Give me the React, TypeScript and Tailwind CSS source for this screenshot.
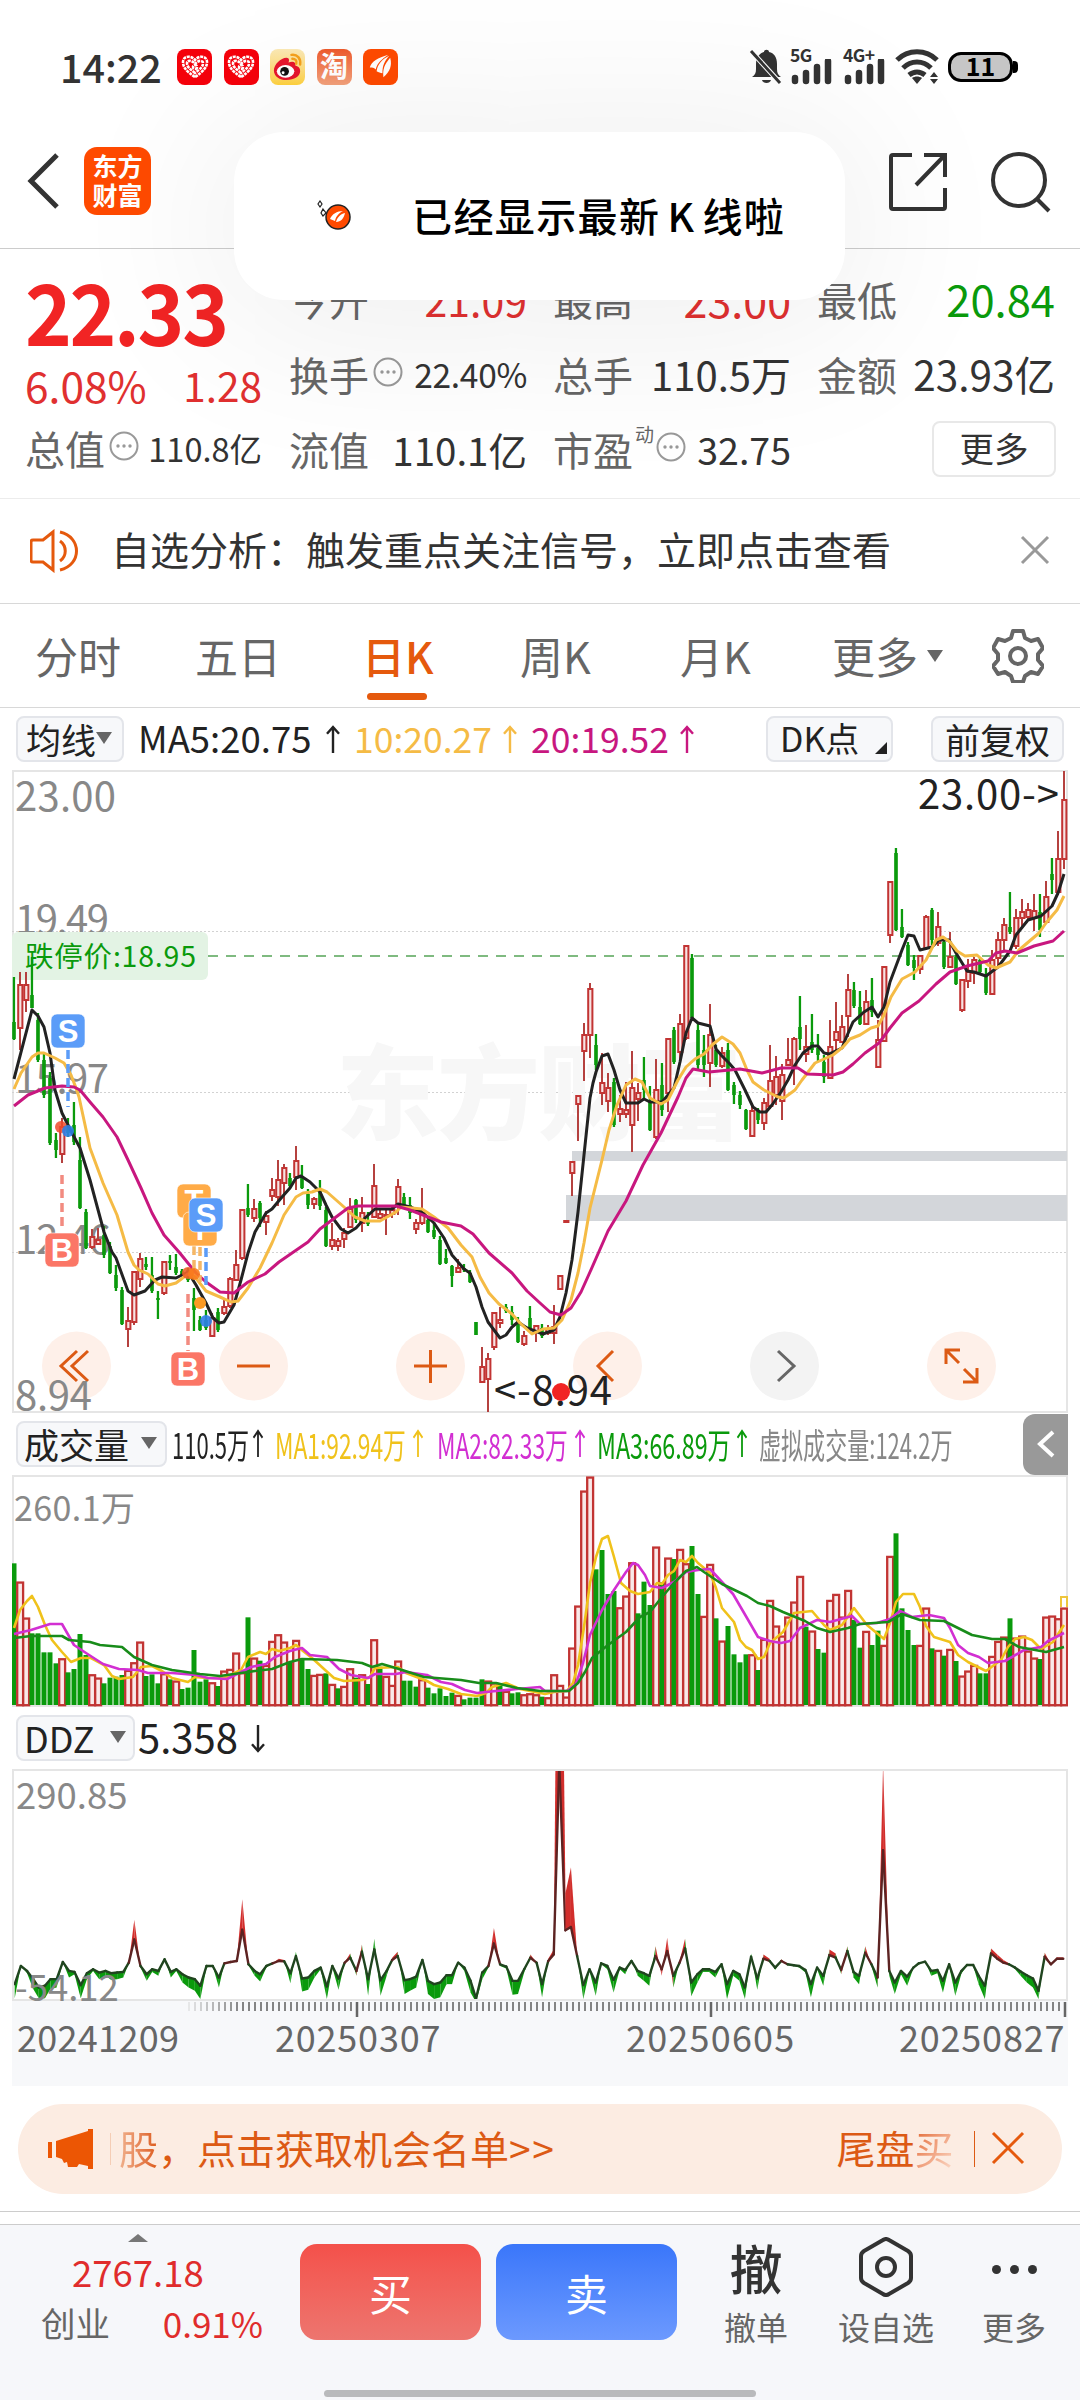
import React from 'react';

const RED = '#c23433';
const GREEN = '#0a9a0c';

// [up, high, bodyTop, bodyBottom, low]
type Candle = [number, number, number, number, number];

const candles: Candle[] = [
  [0, 977, 1022, 1039, 1040], [1, 972, 985, 1028, 1050], [1, 972, 985, 1000, 1012], [0, 957, 995, 1008, 1008],
  [0, 1013, 1020, 1060, 1062], [0, 1053, 1060, 1095, 1098], [0, 1072, 1078, 1143, 1145], [0, 1133, 1140, 1150, 1158],
  [1, 1118, 1127, 1154, 1163], [0, 1118, 1125, 1133, 1137], [0, 1102, 1125, 1142, 1145], [0, 1137, 1160, 1208, 1209],
  [0, 1209, 1212, 1248, 1249], [1, 1229, 1237, 1247, 1249], [1, 1228, 1240, 1244, 1245], [0, 1226, 1235, 1255, 1258],
  [0, 1242, 1246, 1273, 1274], [0, 1265, 1275, 1288, 1291], [0, 1287, 1290, 1324, 1325], [1, 1307, 1321, 1329, 1347],
  [1, 1271, 1272, 1322, 1325], [1, 1253, 1259, 1279, 1287], [0, 1257, 1264, 1267, 1270], [0, 1257, 1275, 1291, 1293],
  [0, 1291, 1298, 1300, 1319], [1, 1262, 1262, 1293, 1295], [0, 1255, 1261, 1263, 1270], [0, 1254, 1267, 1273, 1275],
  [0, 1269, 1271, 1275, 1276], [0, 1268, 1270, 1280, 1282], [0, 1288, 1298, 1310, 1331], [0, 1316, 1320, 1330, 1331],
  [0, 1310, 1320, 1328, 1330], [1, 1313, 1318, 1336, 1337], [0, 1308, 1312, 1330, 1332], [1, 1300, 1307, 1313, 1315],
  [1, 1277, 1279, 1306, 1308], [1, 1250, 1265, 1280, 1280], [1, 1210, 1210, 1258, 1260], [0, 1184, 1208, 1215, 1217],
  [1, 1199, 1209, 1218, 1222], [0, 1201, 1203, 1218, 1227], [1, 1211, 1216, 1222, 1235], [1, 1178, 1190, 1196, 1201],
  [1, 1160, 1180, 1197, 1206], [1, 1164, 1168, 1183, 1205], [0, 1173, 1178, 1186, 1188], [1, 1146, 1161, 1177, 1190],
  [0, 1165, 1177, 1188, 1189], [0, 1189, 1194, 1205, 1209], [1, 1197, 1199, 1204, 1209], [0, 1180, 1190, 1206, 1210],
  [0, 1207, 1210, 1246, 1247], [1, 1223, 1240, 1246, 1250], [1, 1238, 1241, 1246, 1251], [1, 1228, 1233, 1239, 1248],
  [1, 1198, 1209, 1227, 1228], [0, 1199, 1200, 1220, 1223], [1, 1197, 1213, 1223, 1232], [0, 1212, 1220, 1224, 1226],
  [1, 1164, 1186, 1217, 1218], [1, 1208, 1214, 1218, 1219], [1, 1210, 1215, 1216, 1235], [1, 1205, 1210, 1214, 1218],
  [1, 1179, 1187, 1205, 1215], [0, 1193, 1197, 1205, 1209], [0, 1197, 1205, 1213, 1219], [1, 1219, 1223, 1229, 1234],
  [1, 1188, 1213, 1223, 1225], [0, 1217, 1220, 1232, 1233], [0, 1222, 1230, 1237, 1239], [0, 1236, 1240, 1264, 1265],
  [0, 1249, 1258, 1263, 1264], [0, 1265, 1266, 1276, 1287], [1, 1259, 1268, 1272, 1273], [0, 1264, 1268, 1270, 1272],
  [0, 1270, 1273, 1282, 1283], [0, 1322, 1322, 1335, 1335], [1, 1347, 1367, 1382, 1382], [1, 1353, 1359, 1379, 1412],
  [1, 1312, 1313, 1347, 1350], [1, 1307, 1320, 1323, 1328], [0, 1304, 1307, 1311, 1313], [0, 1306, 1312, 1320, 1325],
  [0, 1317, 1320, 1342, 1343], [1, 1331, 1336, 1344, 1346], [0, 1306, 1318, 1328, 1331], [1, 1325, 1326, 1332, 1342],
  [0, 1324, 1328, 1336, 1338], [1, 1325, 1329, 1333, 1335], [1, 1305, 1327, 1333, 1344], [1, 1275, 1276, 1289, 1289],
  [1, 1221, 1221, 1222, 1222], [1, 1161, 1162, 1173, 1196], [1, 1095, 1096, 1104, 1141], [1, 1023, 1035, 1051, 1081],
  [1, 983, 989, 1035, 1058], [0, 1034, 1045, 1065, 1070], [1, 1053, 1083, 1093, 1105], [1, 1073, 1088, 1101, 1112],
  [0, 1078, 1082, 1125, 1127], [1, 1095, 1109, 1114, 1122], [1, 1082, 1110, 1114, 1118], [1, 1051, 1088, 1125, 1152],
  [1, 1083, 1093, 1099, 1121], [0, 1057, 1080, 1090, 1100], [0, 1086, 1102, 1130, 1131], [1, 1059, 1090, 1137, 1139],
  [0, 1063, 1085, 1110, 1116], [1, 1038, 1039, 1093, 1112], [0, 1027, 1030, 1062, 1064], [1, 1014, 1024, 1052, 1060],
  [1, 945, 946, 1038, 1040], [0, 954, 958, 1018, 1018], [0, 1022, 1030, 1065, 1069], [0, 1035, 1050, 1065, 1077],
  [1, 1004, 1035, 1063, 1087], [0, 1045, 1050, 1065, 1067], [1, 1047, 1053, 1066, 1068], [0, 1043, 1050, 1090, 1091],
  [0, 1082, 1085, 1095, 1104], [0, 1091, 1095, 1105, 1109], [0, 1109, 1110, 1129, 1130], [1, 1103, 1111, 1136, 1137],
  [0, 1108, 1110, 1120, 1124], [1, 1098, 1103, 1123, 1130], [1, 1045, 1081, 1106, 1109], [1, 1056, 1077, 1095, 1105],
  [1, 1064, 1075, 1101, 1120], [1, 1038, 1060, 1065, 1066], [1, 1037, 1039, 1068, 1085], [0, 996, 1027, 1039, 1050],
  [1, 1025, 1047, 1054, 1062], [0, 1014, 1042, 1050, 1053], [0, 1034, 1048, 1055, 1062], [0, 1055, 1062, 1077, 1083],
  [1, 1020, 1047, 1078, 1079], [1, 1002, 1032, 1040, 1050], [1, 1015, 1027, 1042, 1043], [1, 974, 990, 1016, 1037],
  [0, 982, 990, 1006, 1008], [0, 991, 1007, 1024, 1025], [1, 990, 1002, 1024, 1025], [0, 978, 1000, 1012, 1017],
  [1, 1020, 1040, 1067, 1068], [1, 967, 967, 1041, 1041], [1, 882, 882, 935, 943], [0, 848, 853, 930, 931],
  [0, 909, 927, 937, 938], [0, 942, 945, 965, 966], [0, 955, 960, 968, 980], [1, 955, 956, 969, 974],
  [1, 915, 917, 948, 950], [0, 908, 910, 940, 945], [1, 912, 927, 943, 946], [0, 938, 942, 967, 969],
  [1, 932, 957, 967, 968], [0, 955, 957, 984, 985], [1, 980, 980, 1010, 1012], [1, 959, 972, 981, 988],
  [1, 957, 960, 973, 984], [0, 957, 960, 972, 975], [0, 968, 975, 993, 995], [1, 950, 960, 994, 995],
  [1, 932, 940, 958, 966], [1, 918, 925, 940, 950], [0, 892, 927, 932, 934], [1, 909, 918, 946, 949],
  [1, 899, 912, 918, 928], [1, 903, 910, 917, 920], [1, 894, 911, 918, 931], [0, 894, 912, 930, 937],
  [1, 881, 897, 922, 923], [0, 858, 874, 880, 894], [1, 831, 859, 892, 895], [1, 771, 800, 859, 869],
];

const ma5 =
  '14,1079 32,1010 38,1016 44,1027 50,1053 55,1090 62,1113 72,1133 80,1148 90,1180 104,1232 112,1252 116,1258 128,1291 134,1295 145,1291 155,1280 162,1277 176,1278 188,1272 196,1285 206,1303 213,1318 219,1323 224,1322 234,1305 241,1280 248,1253 255,1232 266,1213 272,1209 282,1197 290,1188 296,1178 301,1176 310,1182 320,1192 326,1205 332,1217 341,1229 348,1233 356,1228 365,1218 375,1209 392,1209 398,1204 410,1207 422,1212 434,1223 444,1238 452,1255 464,1269 470,1273 476,1287 482,1307 488,1322 494,1330 500,1338 506,1335 512,1327 518,1322 527,1328 535,1331 543,1334 554,1330 560,1317 566,1293 572,1260 578,1212 584,1155 590,1098 593,1083 596,1072 602,1056 608,1054 614,1070 620,1090 626,1103 638,1103 644,1099 650,1102 662,1102 668,1095 674,1088 680,1062 686,1033 692,1018 698,1023 710,1026 716,1049 722,1056 729,1063 735,1070 745,1090 753,1107 760,1112 766,1112 772,1105 781,1092 788,1080 795,1065 803,1053 812,1046 818,1046 824,1053 829,1054 842,1048 846,1038 853,1022 864,1012 872,1007 878,1017 884,1007 890,982 902,950 908,935 914,936 920,950 932,947 939,940 949,940 956,953 967,971 974,972 986,976 998,967 1010,951 1016,935 1028,920 1041,916 1052,906 1058,893 1064,874';
const ma10 =
  '14,1089 21,1073 32,1057 38,1053 44,1053 55,1058 64,1063 71,1075 76,1088 79,1097 90,1148 103,1183 117,1215 128,1252 134,1265 139,1270 148,1274 158,1284 165,1286 176,1283 188,1274 195,1277 206,1291 220,1297 231,1302 238,1301 248,1288 260,1268 272,1243 284,1215 296,1197 303,1193 312,1192 320,1189 327,1192 344,1207 355,1217 365,1221 380,1221 396,1212 401,1207 422,1209 434,1217 448,1228 461,1245 472,1257 480,1277 489,1293 499,1304 512,1314 520,1323 532,1334 543,1329 554,1328 562,1320 571,1300 578,1273 584,1243 590,1208 602,1160 609,1130 617,1105 626,1085 635,1079 642,1082 650,1098 661,1104 668,1100 678,1080 686,1067 695,1059 704,1054 712,1045 722,1037 733,1044 740,1053 747,1070 753,1082 764,1090 778,1097 784,1098 795,1090 802,1080 815,1063 833,1055 843,1047 850,1039 860,1035 871,1028 878,1026 884,1015 891,997 902,979 915,972 926,960 936,940 943,937 950,942 957,951 965,956 977,955 988,965 996,968 1010,962 1019,950 1039,933 1046,923 1057,910 1064,896';
const ma20 =
  '14,1106 28,1095 45,1088 62,1086 74,1087 80,1090 90,1102 103,1117 117,1137 128,1160 141,1188 152,1213 164,1235 179,1252 196,1273 206,1282 220,1292 234,1293 248,1282 265,1274 279,1262 308,1242 320,1229 332,1220 348,1208 358,1206 396,1206 410,1210 441,1222 461,1226 473,1234 489,1253 512,1273 527,1291 540,1303 550,1312 561,1315 571,1308 581,1292 590,1272 608,1231 626,1201 643,1165 661,1133 678,1097 686,1078 693,1069 709,1072 740,1069 762,1073 781,1068 798,1068 807,1074 833,1075 843,1072 853,1064 865,1053 879,1043 890,1028 902,1013 919,1001 936,984 950,972 967,966 988,961 996,953 1005,951 1017,953 1034,946 1053,941 1064,931';

// bar tops in thirds of a pixel, positive = up day, negative = down day
const volumes = [
  -460, 515, 623, -670, -670, -727, -727, -760, 745, -787, -777, -672, -735, 793, 803, -820, -803, -800, -795, 780,
  757, 695, -798, -793, -820, 790, -808, 812, -837, -833, -720, -815, -808, 817, -828, 782, 777, 728, 787, -622,
  743, -752, 765, 693, 673, 695, -757, 690, -748, -777, 795, 792, -790, 822, -835, 828, 775, -803, 793, -822,
  688, -770, 798, 825, 752, -812, -812, -830, 808, -833, -850, -835, -858, -848, 855, -868, -863, -863, -808, 812,
  818, -820, 843, -850, -847, 853, 850, 853, -860, 862, 793, 825, 860, 713, 587, 242, 200, -478, -420, -552,
  -543, 592, 557, 457, -610, -515, -585, 410, -517, 443, -447, 417, 460, -408, -552, 618, 462, -625, 692, -648,
  -733, -757, -733, 733, -780, 687, 570, 647, 677, 620, 575, 498, -650, 662, -717, -728, 570, 552, 620, 540,
  -630, -713, 663, -705, -662, 705, 438, -370, -595, -660, -705, 705, 593, -715, 720, -737, 717, -753, 797, 782,
  765, -790, -790, 738, 693, 680, -625, 683, 677, 722, 743, -747, 620, 617, 625, 593,
];

const vma1 =
  '14,218 20,200 27,191 32,186 38,197 45,215 52,230 62,242 71,252 81,248 91,248 104,255 112,266 119,269 133,267 141,257 152,256 162,261 172,268 188,272 195,267 207,268 224,268 241,260 248,247 260,242 266,244 272,239 279,241 290,238 296,235 303,241 312,248 324,259 334,268 344,271 362,270 370,267 375,258 398,257 406,263 427,271 434,275 448,279 461,284 477,286 486,283 492,277 506,273 520,279 540,283 545,284 554,282 567,281 573,273 578,255 584,217 590,173 596,147 602,129 608,126 614,147 621,173 630,181 638,184 650,182 657,173 662,174 668,165 674,161 680,150 686,152 692,146 698,153 710,163 716,178 722,198 734,212 740,230 746,237 752,240 758,249 764,247 770,233 783,222 794,203 812,201 824,215 830,220 842,215 854,198 867,215 884,229 890,213 896,192 903,184 914,184 920,197 926,216 934,227 950,232 958,245 968,252 986,261 1001,250 1008,237 1015,229 1024,227 1032,230 1041,239 1053,232 1064,215';
const vma2 =
  '14,224 31,220 50,214 62,214 74,235 86,243 103,254 119,259 138,260 148,263 172,263 196,265 208,268 227,269 241,262 251,257 266,254 275,247 290,241 302,238 310,245 327,247 339,259 351,265 368,268 375,264 396,264 406,262 427,265 441,272 452,274 465,280 477,283 496,281 517,279 540,277 545,281 567,281 576,274 583,253 590,225 602,200 614,180 626,162 633,153 638,155 645,165 650,176 662,178 674,172 686,162 698,160 710,159 722,172 733,184 747,208 758,227 770,231 781,233 790,231 800,218 817,210 830,212 852,206 860,214 877,213 890,209 900,201 912,207 929,205 944,208 950,218 958,235 968,243 979,247 988,253 1005,251 1024,240 1041,237 1048,231 1064,223';
const vma3 =
  '14,228 31,226 62,226 69,230 90,232 100,235 122,237 134,247 152,255 172,260 200,264 220,266 241,263 255,261 272,259 290,252 302,249 337,250 362,253 372,257 382,254 399,259 424,267 461,270 479,273 496,273 517,278 540,281 569,281 578,273 585,262 592,248 608,235 626,222 640,207 650,202 662,187 674,173 686,161 697,157 704,162 722,174 747,186 758,193 770,196 783,202 805,211 817,218 830,222 848,218 860,214 888,212 902,204 920,210 944,211 956,217 972,225 992,229 1005,229 1019,237 1046,242 1064,237';

// [x, slow line, fast line]
const ddz = [
  [20, 705, 748], [29, 650, 650], [38, 665, 672], [47, 690, 720], [55, 715, 748], [64, 710, 748], [72, 690, 720], [81, 690, 715],
  [90, 638, 638], [99, 665, 685], [107, 668, 675], [116, 708, 748], [125, 672, 690], [134, 660, 665], [143, 670, 690], [152, 665, 680],
  [160, 672, 692], [169, 670, 690], [178, 668, 685], [186, 640, 640], [194, 570, 510], [203, 650, 655], [212, 675, 695], [220, 660, 668],
  [229, 665, 680], [238, 630, 625], [247, 668, 685], [255, 660, 665], [264, 675, 700], [273, 685, 715], [282, 690, 725], [290, 710, 750],
  [299, 650, 655], [308, 650, 650], [317, 685, 715], [325, 642, 640], [334, 638, 636], [343, 635, 633], [351, 540, 448], [360, 645, 648],
  [369, 665, 680], [377, 675, 697], [386, 650, 655], [395, 642, 642], [404, 635, 628], [412, 636, 632], [421, 672, 702], [429, 620, 607],
  [438, 688, 727], [447, 685, 722], [456, 665, 685], [465, 655, 660], [474, 712, 750], [482, 650, 655], [491, 688, 722], [500, 640, 638],
  [508, 625, 612], [517, 665, 680], [525, 607, 585], [534, 690, 740], [543, 600, 568], [552, 693, 740], [561, 665, 680], [569, 632, 625],
  [577, 620, 607], [587, 693, 735], [595, 690, 725], [604, 682, 715], [613, 632, 628], [621, 695, 735], [630, 705, 750], [639, 700, 745],
  [648, 678, 705], [656, 678, 705], [665, 640, 640], [674, 655, 665], [683, 695, 730], [691, 748, 760], [700, 670, 690], [709, 650, 655],
  [717, 582, 535], [726, 645, 650], [735, 652, 658], [744, 695, 737], [752, 695, 735], [761, 660, 670], [770, 625, 615], [779, 640, 640],
  [787, 705, 745], [796, 635, 628], [804, 615, 600], [812, 40, -1235], [821, 542, 430], [829, 532, 352], [838, 620, 615], [847, 708, 750],
  [856, 660, 665], [865, 700, 740], [873, 642, 645], [882, 650, 660], [891, 692, 730], [900, 655, 660], [908, 662, 675], [917, 635, 630],
  [926, 665, 680], [935, 672, 695], [943, 680, 710], [952, 620, 590], [961, 660, 680], [969, 605, 565], [978, 680, 715], [987, 640, 635],
  [995, 597, 568], [1004, 700, 742], [1013, 675, 700], [1021, 660, 668], [1030, 660, 668], [1039, 668, 685], [1048, 645, 648], [1056, 705, 750],
  [1065, 665, 680], [1074, 675, 695], [1082, 715, 750], [1091, 622, 612], [1100, 688, 722], [1109, 628, 615], [1118, 635, 628], [1126, 655, 662],
  [1135, 635, 630], [1144, 645, 648], [1153, 648, 650], [1161, 650, 655], [1170, 662, 670], [1178, 705, 745], [1187, 655, 660], [1196, 680, 710],
  [1205, 617, 600], [1214, 625, 612], [1222, 662, 675], [1231, 605, 590], [1240, 668, 685], [1248, 680, 705], [1257, 610, 590], [1266, 645, 650],
  [1275, 685, 715], [1283, 300, 40], [1292, 665, 680], [1300, 700, 735], [1309, 665, 675], [1318, 682, 710], [1327, 655, 658], [1335, 642, 645],
  [1344, 637, 634], [1353, 665, 680], [1362, 662, 672], [1370, 695, 730], [1379, 645, 650], [1388, 700, 740], [1397, 665, 672], [1405, 647, 650],
  [1414, 647, 650], [1422, 680, 705], [1431, 710, 750], [1440, 612, 597], [1449, 628, 615], [1458, 640, 632], [1466, 645, 642], [1475, 655, 660],
  [1483, 667, 680], [1492, 678, 700], [1501, 688, 715], [1509, 725, 750], [1518, 622, 610], [1527, 645, 645], [1536, 628, 624], [1545, 628, 624],
];

const barX = (i: number) => 14 + i * 6;

const Arrow: React.FC<{ className?: string; down?: boolean }> = ({ className = 'w-4', down }) => (
  <svg viewBox="0 0 16 30" preserveAspectRatio="none" className={`h-[29px] shrink-0 ${down ? 'rotate-180' : ''} ${className}`} fill="none" stroke="currentColor" strokeWidth="2.4">
    <path d="M8 29V2M2 9l6-7 6 7" />
  </svg>
);

const Triangle: React.FC<{ className?: string }> = ({ className = '' }) => (
  <svg viewBox="0 0 16 12" className={`h-3 w-4 shrink-0 ${className}`} fill="#666">
    <path d="M0 0h16L8 12z" />
  </svg>
);

const InfoDot = () => (
  <svg viewBox="0 0 30 30" className="h-[30px] w-[30px] shrink-0" fill="none" stroke="#999" strokeWidth="2">
    <circle cx="15" cy="15" r="13.5" />
    <g fill="#999" stroke="none">
      <circle cx="9" cy="15" r="1.7" />
      <circle cx="15" cy="15" r="1.7" />
      <circle cx="21" cy="15" r="1.7" />
    </g>
  </svg>
);

const Flame: React.FC<{ className?: string }> = ({ className = '' }) => (
  <svg viewBox="0 0 36 36" className={className} fill="#fff">
    <path d="M7 19C9 13 15 9 26 6c-7 5-11 8-13 15-2-2-3-2-6-2z" />
    <path d="M14 23c1-7 5-12 13-16-5 6-7 10-7 18-2 0-4-1-6-2z" />
    <path d="M21 29c-1-8 1-13 7-20 2 8 0 14-7 20z" />
  </svg>
);

const JdBadge = () => (
  <div className="flex h-9 w-[35px] items-center justify-center rounded-lg bg-[#f5000b]">
    <svg viewBox="0 0 28 24" className="h-6 w-7" fill="none" stroke="#fff" strokeWidth="2.6" strokeDasharray="3 0.8">
      <path d="M14 22C5 16 2 12 2 7c0-6 8-7 12-2 4-5 12-4 12 2 0 5-3 9-12 15z" />
      <path d="M14 18c-5-4-8-6-8-10 0-3 5-3 8 1 3-4 8-4 8-1 0 4-3 6-8 10z" />
      <circle cx="14" cy="12" r="2" />
    </svg>
  </div>
);

const SignalBars: React.FC<{ label: string; className?: string }> = ({ label, className = '' }) => (
  <div className={`flex h-[37px] w-[42px] flex-col ${className}`}>
    <span className="h-3 whitespace-nowrap text-[17.5px] font-bold leading-[13px] tracking-[-0.5px]">{label}</span>
    <svg viewBox="0 0 42 26" className="-mt-[1px] h-[26px] w-[42px]" stroke="currentColor" strokeWidth="6.5" strokeLinecap="round">
      <path d="M5 19v3M16 14v8M27 8v14M38 2v20" />
    </svg>
  </div>
);

const StatusBar = () => (
  <div className="flex h-[124px] items-center pl-[60px] pr-[62px] pt-[9px] text-[#333]">
    <span className="-mt-[1px] w-[117px] text-[39.5px] font-medium leading-none">14:22</span>
    <div className="flex gap-[11.5px]">
      <JdBadge />
      <JdBadge />
      <div className="h-9 w-[35px] rounded-lg bg-gradient-to-b from-[#fbe9b5] to-[#ffd23c]">
        <svg viewBox="0 0 36 36">
          <path d="M4 22c0-6 7-13 13-13 3 0 3 3 2 5 4-2 8-1 7 3 4 1 5 3 5 6 0 5-6 9-14 9-7 0-13-4-13-10z" fill="#e6162d" />
          <ellipse cx="16" cy="23" rx="9" ry="6.500" fill="#fff" />
          <circle cx="15" cy="23" r="4.500" fill="#111" />
          <circle cx="13.500" cy="24.500" r="1.500" fill="#fff" />
          <path d="M22 6c6-1 10 4 9 10M23 10c3 0 5 2 4 5" fill="none" stroke="#f5a11c" strokeWidth="2.500" strokeLinecap="round" />
        </svg>
      </div>
      <div className="flex h-9 w-[35px] items-center justify-center rounded-lg bg-gradient-to-b from-[#ee5a2b] to-[#f3a27c] pb-[3px] text-[28px] font-bold leading-none text-white">淘</div>
      <div className="h-9 w-[35px] rounded-lg bg-[#ff4a00]">
        <Flame />
      </div>
    </div>
    <div className="ml-auto flex items-center text-[#333]">
      <svg viewBox="0 0 34 38" className="h-[38px] w-[34px]" fill="#333">
        <path d="M3 29c3-2 4-4 4-8v-5C7 9 11 5 15 4c0-3 5-3 5 0 5 1 8 5 8 12v5c0 4 1 6 4 8z" />
        <path d="M13 32h9c-1 4-8 4-9 0z" />
        <path d="M3 4l29 32" stroke="#fff" strokeWidth="5" />
        <path d="M2 3l29 32" stroke="#333" strokeWidth="3" />
      </svg>
      <SignalBars label="5G" className="ml-[7px]" />
      <SignalBars label="4G+" className="ml-[11px]" />
      <svg viewBox="0 0 46 38" className="ml-[10px] h-[38px] w-[46px]" fill="none" stroke="#333" strokeWidth="5">
        <path d="M2 12C13 1 31 1 42 12M8 20c8-8 20-8 28 0M14 27c5-4 11-4 16 0" />
        <path d="M17 30c3-2 7-2 10 0l-5 6z" fill="#333" stroke="none" />
        <path d="M35 29l4-5 4 5zM35 31l4 5 4-5z" fill="#333" stroke="none" />
      </svg>
      <div className="ml-[7px] flex items-center">
        <div className="flex h-[30px] w-[65px] items-center justify-center rounded-[13px] border-[3px] border-black bg-[#c6c6c6] pb-[2px] text-[25px] font-bold leading-none text-black">11</div>
        <div className="h-3 w-[5px] rounded-r bg-black" />
      </div>
    </div>
  </div>
);

const Header = () => (
  <header className="flex h-[125px] items-center border-b border-[#ccc] pl-[26px] pr-[28px]">
    <svg viewBox="0 0 34 56" className="-mt-[10px] h-14 w-[34px]" fill="none" stroke="#333" strokeWidth="5">
      <path d="M31 2L5 28l26 26" />
    </svg>
    <div className="-mt-[10px] ml-[24px] flex h-[68px] w-[67px] flex-col items-center justify-center rounded-[13px] bg-[#ff4a00] pb-[2px] text-[25px] font-bold leading-[29px] text-white">
      <span>东方</span>
      <span>财富</span>
    </div>
    <svg viewBox="0 0 60 60" className="ml-auto -mt-[8px] h-[60px] w-[60px]" fill="none" stroke="#333" strokeWidth="4">
      <path d="M24 3H5q-2 0-2 2v50q0 2 2 2h50q2 0 2-2V36M36 3h21v22M57 3L28 33" />
    </svg>
    <svg viewBox="0 0 62 62" className="-mt-[8px] ml-[42px] h-[62px] w-[62px]" fill="none" stroke="#333" strokeWidth="4">
      <circle cx="29" cy="29" r="26" />
      <path d="M46 47l13 13" />
    </svg>
  </header>
);

const Toast = () => (
  <div className="absolute left-[234px] top-[132px] flex h-[168px] w-[611px] items-center rounded-[50px] bg-white pl-[83px] shadow-[0_10px_170px_20px_rgba(0,0,0,0.07)]">
    <svg viewBox="0 0 36 32" className="h-8 w-9">
      <circle cx="21" cy="17" r="12" fill="#ff4a00" stroke="#222" strokeWidth="1.500" />
      <path d="M13 19c2-5 7-8 13-8-4 2-7 5-8 10zM19 22c1-4 4-8 9-9-1 5-4 9-9 9z" fill="#fff" />
      <path d="M3 1l2 3-2 3-2-3zM6 9l3 4-3 3-2-3z" fill="#fff" stroke="#222" strokeWidth="1.200" />
    </svg>
    <span className="-mt-[2px] ml-[59px] whitespace-nowrap text-[40px] font-medium leading-none tracking-[1.4px] text-black">
      已经显示最新<span className="px-[7px]">K</span>线啦
    </span>
  </div>
);

const Quote = () => (
  <section className="flex h-[250px] border-b border-[#ececec] px-[25px] leading-none text-[#333]">
    <div className="w-[237px]">
      <div className="mt-[18px] h-[84px] w-[200px] origin-left scale-x-[0.935] whitespace-nowrap text-[85px] font-bold leading-[84px] tracking-[-2.5px] text-[#f12424]">22.33</div>
      <div className="mt-[11px] flex h-[46px] items-center justify-between text-[#e03030]">
        <span className="text-[42.5px]">6.08%</span>
        <span className="text-[40.5px]">1.28</span>
      </div>
      <div className="mt-[17px] flex h-[46px] items-center whitespace-nowrap">
        <span className="text-[40px] text-[#666]">总值</span>
        <span className="-mt-1 ml-[4px]"><InfoDot /></span>
        <span className="ml-auto text-[32.5px]">110.8亿</span>
      </div>
    </div>
    <div className="ml-[27px] flex w-[238px] flex-col gap-[29px] pt-[27px]">
      <div className="flex h-[46px] items-center justify-between">
        <span className="text-[40px] text-[#666]">今开</span>
        <span className="text-[41px] text-[#e03030]">21.09</span>
      </div>
      <div className="flex h-[46px] items-center whitespace-nowrap">
        <span className="text-[40px] text-[#666]">换手</span>
        <span className="-mt-1 ml-[4px]"><InfoDot /></span>
        <span className="ml-auto text-[33.5px] tracking-[-0.3px]">22.40%</span>
      </div>
      <div className="flex h-[46px] items-center justify-between whitespace-nowrap">
        <span className="text-[40px] text-[#666]">流值</span>
        <span className="text-[38.5px]">110.1亿</span>
      </div>
    </div>
    <div className="ml-[26px] flex w-[238px] flex-col gap-[29px] pt-[27px]">
      <div className="flex h-[46px] items-center justify-between">
        <span className="text-[40px] text-[#666]">最高</span>
        <span className="text-[43px] text-[#e03030]">23.00</span>
      </div>
      <div className="flex h-[46px] items-center justify-between whitespace-nowrap">
        <span className="text-[40px] text-[#666]">总手</span>
        <span className="text-[40px]">110.5万</span>
      </div>
      <div className="flex h-[46px] items-center whitespace-nowrap">
        <span className="text-[40px] text-[#666]">市盈</span>
        <span className="mb-8 ml-[2px] text-[19px] text-[#666]">动</span>
        <span className="-mt-1 ml-[2px]"><InfoDot /></span>
        <span className="ml-auto text-[37.5px]">32.75</span>
      </div>
    </div>
    <div className="ml-[26px] flex w-[238px] flex-col gap-[29px] pt-[27px]">
      <div className="flex h-[46px] items-center justify-between">
        <span className="text-[40px] text-[#666]">最低</span>
        <span className="text-[43.5px] text-[#0a9a0c]">20.84</span>
      </div>
      <div className="flex h-[46px] items-center justify-between whitespace-nowrap">
        <span className="text-[40px] text-[#666]">金额</span>
        <span className="text-[40.5px]">23.93亿</span>
      </div>
      <div className="-mr-[1px] -mt-[5px] ml-auto flex h-[56px] w-[124px] items-center justify-center rounded-lg border-2 border-[#e8e8e8] bg-white pb-[4px] text-[34.5px]">更多</div>
    </div>
  </section>
);

const Notice = () => (
  <section className="flex h-[105px] items-center border-b border-[#d8d8d8] px-[30px] text-[#333]">
    <svg viewBox="0 0 50 44" className="h-11 w-[50px]" fill="none" stroke="#e5590d" strokeWidth="3">
      <path d="M23 3L13 11H3q-2 0-2 2v18q0 2 2 2h10l10 8zM30 12c7 5 7 15 0 20M30 3c22 5 22 33 0 38" />
    </svg>
    <span className="-mt-[5px] ml-[31px] whitespace-nowrap text-[39px] leading-none">自选分析：触发重点关注信号，立即点击查看</span>
    <svg viewBox="0 0 30 30" className="-mt-[2px] ml-auto h-[30px] w-[30px]" stroke="#999" strokeWidth="3">
      <path d="M2 2l26 26M28 2L2 28" />
    </svg>
  </section>
);

const tabs = [
  { label: '分时', cls: 'w-[160px]' },
  { label: '五日', cls: 'w-[167px]' },
  { label: '日K', cls: 'w-[158px] text-[#e5590d] font-medium' },
  { label: '周K', cls: 'w-[160px]' },
  { label: '月K', cls: 'w-[152px]' },
];

const Tabs = () => (
  <nav className="flex h-[104px] items-center border-b border-[#d8d8d8] pl-[35px] text-[43px] leading-none text-[#666]">
    {tabs.map((tab) => (
      <div key={tab.label} className={`relative shrink-0 ${tab.cls}`}>
        {tab.label}
        {tab.label === '日K' && <span className="absolute -bottom-[23px] left-[5px] h-[7px] w-[60px] rounded bg-[#e5590d]" />}
      </div>
    ))}
    <span className="shrink-0">更多</span>
    <Triangle className="ml-[9px]" />
    <svg viewBox="0 0 52 54" className="ml-[49px] h-[54px] w-[52px] shrink-0" fill="none" stroke="#666" strokeWidth="4" strokeLinejoin="round">
      <path d="M21 2h10l2 7 6 3 7-2 5 9-5 6v6l5 6-5 8-7-2-6 4-2 6H21l-2-6-6-4-7 2-5-8 5-6v-6l-5-6 5-9 7 2 6-3z" />
      <circle cx="26" cy="27" r="8" />
    </svg>
  </nav>
);

const chip = 'flex h-[46px] items-center rounded-lg border-2 border-[#e3e5ea] bg-[#f7f8fa] leading-none text-[#222] whitespace-nowrap pb-[2px]';

const MaRow = () => (
  <div className="flex h-[62px] items-center pl-4 text-[35.5px] leading-none">
    <div className={`${chip} w-[108px] pl-[8px] text-[35px]`}>
      均线
      <Triangle />
    </div>
    <span className="-mt-[2px] ml-[14px] w-[187px] text-[36.5px] text-[#222]">MA5:20.75</span>
    <Arrow className="w-4 text-[#222]" />
    <span className="-mt-[2px] ml-[13px] w-[148px] text-[#f5bb45]">10:20.27</span>
    <Arrow className="w-4 text-[#f5bb45]" />
    <span className="-mt-[2px] ml-[13px] w-[148px] text-[#c8177f]">20:19.52</span>
    <Arrow className="w-4 text-[#c8177f]" />
    <div className={`${chip} ml-auto w-[127px] pl-[12px] text-[34px]`}>
      DK点
      <svg viewBox="0 0 12 12" className="ml-auto mr-[4px] mt-[20px] h-3 w-3" fill="#222">
        <path d="M12 0v12H0z" />
      </svg>
    </div>
    <div className={`${chip} ml-[38px] mr-4 w-[133px] justify-center text-[35px]`}>前复权</div>
  </div>
);

type Mark = { x: number; y: number; text: string; fill: string };

const marks: Mark[] = [
  { x: 68, y: 1031, text: 'S', fill: '#5b9cf8' },
  { x: 62, y: 1250, text: 'B', fill: '#fb7666' },
  { x: 194, y: 1201, text: 'T', fill: '#ffab47' },
  { x: 200, y: 1229, text: 'T', fill: '#ffab47' },
  { x: 206, y: 1215, text: 'S', fill: '#5b9cf8' },
  { x: 188, y: 1369, text: 'B', fill: '#fb7666' },
];

const controls = [
  'M77 1351l-16 15 16 15M88 1351l-16 15 16 15',
  'M237 1366h33',
  'M414 1366h33M430.500 1350v33',
  'M613 1351l-15 15 15 15',
  'M778 1351l16 15-16 15',
  'M946 1364v-14h14M947 1351l12 12M977 1368v14h-14M976 1381l-12-12',
];

const KLineChart = () => (
  <svg viewBox="12 770 1056 643" className="ml-3 block h-[643px] w-[1056px]">
    <rect x="13" y="771" width="1054" height="641" fill="none" stroke="#e5e5e5" strokeWidth="2" />
    <path d="M12 931.500H1067M12 1092.500H1067M12 1252.500H1067" stroke="#d2d2d2" strokeDasharray="2 2" />
    <text x="336" y="1132" fontSize="103" fontWeight="900" fill="#f7f7f7" textLength="406">东方财富</text>
    <path d="M572 1151h495v10H572zM566 1195h501v26H566z" fill="#d3d6da" />
    <g fill="#888" fontSize="40">
      <text x="15" y="811" textLength="101">23.00</text>
      <text x="15" y="934" textLength="94">19.49</text>
      <text x="15" y="1093" textLength="94">15.97</text>
      <text x="15" y="1254" textLength="96">12.46</text>
    </g>
    <rect x="12" y="932" width="196" height="48" rx="6" fill="#e3f3e4" />
    <path d="M208 956H1065" stroke="#7fba80" strokeWidth="2" strokeDasharray="10 8" />
    <text x="25" y="967" fontSize="28.500" fill={GREEN} textLength="171">跌停价:18.95</text>

    {candles.map(([up, high, top, bottom, low], i) =>
      up ? (
        <g key={i} stroke={RED} fill="#f7e3e3">
          <path d={`M${barX(i)} ${high}V${low}`} strokeWidth="2" stroke="#b5413f" />
          <rect x={barX(i) - 1.8} y={top} width="4.200" height={Math.max(bottom - top, 0.5)} strokeWidth="2" />
        </g>
      ) : (
        <g key={i} fill={GREEN}>
          <rect x={barX(i) - 1.2} y={high} width="2.300" height={low - high} />
          <rect x={barX(i) - 1.8} y={top} width="3.600" height={bottom - top} />
        </g>
      )
    )}

    <g fill="none" strokeWidth="3" strokeLinejoin="round">
      <polyline points={ma5} stroke="#222" />
      <polyline points={ma10} stroke="#f5bb45" />
      <polyline points={ma20} stroke="#c8177f" />
    </g>

    <g strokeWidth="3.500" strokeDasharray="9 5" fill="none">
      <path d="M68 1050v57M206 1234v56" stroke="#5b9cf8" />
      <path d="M62 1175v56M188 1294v57" stroke="#f28b80" />
      <path d="M194 1232v38M200 1247v35" stroke="#f5b766" />
    </g>
    <circle cx="61" cy="1127" r="6" fill="#f04a2a" fillOpacity="0.850" />
    <circle cx="68" cy="1131" r="6" fill="#2f80e8" fillOpacity="0.900" />
    <circle cx="188" cy="1273" r="6" fill="#f0622a" fillOpacity="0.900" />
    <circle cx="194" cy="1274" r="6" fill="#f97c1c" fillOpacity="0.900" />
    <circle cx="200" cy="1303" r="6" fill="#fb9a24" />
    <circle cx="206" cy="1321" r="6" fill="#2f80e8" fillOpacity="0.900" />
    {marks.map((m) => (
      <g key={`${m.x}-${m.y}`}>
        <rect x={m.x - 17} y={m.y - 17} width="34" height="34" rx="6" fill={m.fill} stroke="#fff" strokeOpacity="0.600" />
        <text x={m.x} y={m.y + 11} fontSize="31" fontWeight="700" fill="#fff" textAnchor="middle" fontFamily="Liberation Sans, sans-serif">{m.text}</text>
      </g>
    ))}

    {controls.map((d, i) => (
      <g key={d}>
        <circle cx={76.5 + i * 177} cy="1366" r="34.500" fill={i === 4 ? '#f3f3f3' : '#fef0e9'} />
        <path d={d} fill="none" stroke={i === 4 ? '#666' : '#dc5a14'} strokeWidth="3" />
      </g>
    ))}
    <text x="15" y="1410" fontSize="40" fill="#888" textLength="77">8.94</text>
    <g fill="#222" fontSize="40">
      <text x="918" y="809" textLength="141">23.00-&gt;</text>
      <text x="494" y="1405" textLength="118">&lt;-8.94</text>
    </g>
    <circle cx="561" cy="1392" r="9" fill="#f12424" />
  </svg>
);

const volumeLegend = [
  { text: '110.5万', box: 'w-[80px]', scale: 'scale-x-[0.63]', color: 'text-[#222]', gap: 'mr-[11px]' },
  { text: 'MA1:92.94万', box: 'w-[137px]', scale: 'scale-x-[0.65]', color: 'text-[#f0c21b]', gap: 'mr-[13px]' },
  { text: 'MA2:82.33万', box: 'w-[137px]', scale: 'scale-x-[0.65]', color: 'text-[#d22fd2]', gap: 'mr-[11px]' },
  { text: 'MA3:66.89万', box: 'w-[139px]', scale: 'scale-x-[0.665]', color: 'text-[#0a9a0c]', gap: 'mr-[11px]' },
];

const VolumeRow = () => (
  <div className="mr-3 flex h-[62px] items-center pl-4">
    <div className={`${chip} w-[151px] shrink-0 pl-[6px] text-[35px]`}>
      成交量
      <Triangle className="ml-auto mr-[8px]" />
    </div>
    <div className="-mt-[2px] ml-[5px] flex items-center text-[35px] leading-none">
      {volumeLegend.map((item) => (
        <React.Fragment key={item.text}>
          <span className={`shrink-0 ${item.box} ${item.color}`}>
            <span className={`inline-block origin-left whitespace-nowrap ${item.scale}`}>{item.text}</span>
          </span>
          <Arrow className={`w-[12px] ${item.color} ${item.gap}`} />
        </React.Fragment>
      ))}
      <span className="w-[200px] text-[#888]">
        <span className="inline-block origin-left scale-x-[0.63] whitespace-nowrap">虚拟成交量:124.2万</span>
      </span>
    </div>
    <div className="ml-auto flex h-[61px] w-[45px] shrink-0 items-center justify-center rounded-l-xl bg-[#999]">
      <svg viewBox="0 0 18 28" className="h-7 w-[18px]" fill="none" stroke="#fff" strokeWidth="4">
        <path d="M16 2L3 14l13 12" />
      </svg>
    </div>
  </div>
);

const VolumeChart = () => (
  <svg viewBox="12 65 1056 232" className="ml-3 block h-[232px] w-[1056px]">
    <rect x="13" y="66" width="1054" height="230" fill="none" stroke="#e5e5e5" strokeWidth="2" />
    <text x="14" y="111" fontSize="34" fill="#888" textLength="121">260.1万</text>
    {volumes.map((v, i) => {
      const y = Math.abs(v) / 3;
      return v > 0 ? (
        <rect key={i} x={barX(i) - 2.8} y={y + 0.9} width="5.900" height={294.3 - y} fill="#f9e9e9" stroke={RED} strokeWidth="2.300" />
      ) : (
        <rect key={i} x={barX(i) - 2.5} y={y} width="5" height={295 - y} fill="#0a9a0c" />
      );
    })}
    <path d="M1061 197v-10h6v10" fill="none" stroke="#eec63c" strokeWidth="2" />
    <g fill="none" strokeWidth="2.600" strokeLinejoin="round">
      <polyline points={vma1} stroke="#f0c21b" />
      <polyline points={vma2} stroke="#d22fd2" />
      <polyline points={vma3} stroke="#188c1a" />
    </g>
  </svg>
);

const DdzChart = () => (
  <div className="relative ml-3 h-[232px] w-[1056px] border-2 border-[#e5e5e5]">
    <svg viewBox="19 60 1530 690" preserveAspectRatio="none" className="block h-full w-full">
      {ddz.slice(1).map(([x, slow, fast], i) => {
        const [px, pSlow, pFast] = ddz[i];
        const rising = pFast + fast < pSlow + slow;
        return (
          <g key={x}>
            <path d={`M${px} ${pSlow}L${x} ${slow}V${fast}L${px} ${pFast}z`} fill={rising ? '#d22e2c' : '#0a9a0c'} />
            <path d={`M${px} ${pSlow}L${x} ${slow}`} fill="none" stroke={rising ? '#5c2322' : '#20451f'} strokeWidth="2.400" strokeLinecap="round" vectorEffect="non-scaling-stroke" />
          </g>
        );
      })}
    </svg>
    <span className="absolute left-[2px] top-[5px] text-[36.500px] leading-none text-[#888]">290.85</span>
    <span className="absolute -bottom-[5px] left-[1px] text-[36.500px] leading-none text-[#888]">-54.12</span>
  </div>
);

const minorTicks = Array.from({ length: 146 }, (_, i) => 189 + i * 6);

const DateAxis = () => (
  <div className="ml-3 h-[85px] w-[1056px] bg-[#f7f8fa] text-[36px] leading-none text-[#666]">
    <svg viewBox="12 0 1056 18" className="block h-[18px] w-[1056px]" stroke="#777" strokeWidth="1.800">
      {minorTicks.map((x) => (
        <path key={x} d={`M${x} 1v9`} strokeOpacity={Math.min(1, (x - 180) / 60)} />
      ))}
      <path d="M357 1v15M711 1v15M1065 1v15" strokeWidth="2.500" stroke="#666" />
    </svg>
    <div className="-mt-[1px] flex pl-[5px]">
      <span className="w-[258px] tracking-[0.3px]">20241209</span>
      <span className="w-[351px] tracking-[0.800px]">20250307</span>
      <span className="w-[273px] tracking-[1.200px]">20250605</span>
      <span className="tracking-[0.800px]">20250827</span>
    </div>
  </div>
);

const PromoBar = () => (
  <div className="mx-[18px] mt-[18px] flex h-[90px] items-center rounded-full bg-[#fcece2] pl-[30px] pr-[37px] text-[39px] leading-none text-[#dc5a14]">
    <svg viewBox="0 0 46 40" className="h-10 w-[46px]" fill="#ec5604">
      <path d="M0 13h4v16H0zM8 12L40 2V0h5v40h-5v-3l-9-2-2 3h-9l-1-5-3 1-2-4-6-2z" />
    </svg>
    <span className="ml-[16px] mr-[8px] h-8 w-px bg-[#f5cdb5]" />
    <span className="-mt-[4px] whitespace-nowrap"><span className="bg-gradient-to-r from-[#efb08c] to-[#dc5a14] bg-clip-text text-transparent">股</span>，点击获取机会名单<span className="tracking-[1.5px]">&gt;&gt;</span></span>
    <span className="-mt-[4px] ml-auto whitespace-nowrap">尾盘<span className="bg-gradient-to-br from-[#dc5a14] to-[#fbe0d0] bg-clip-text text-transparent">买</span></span>
    <span className="ml-[20px] h-9 w-[1.5px] bg-[#dc5a14]" />
    <svg viewBox="0 0 34 34" className="-mt-[2px] ml-[16px] h-[34px] w-[34px]" stroke="#e5590d" strokeWidth="3">
      <path d="M2 2l30 30M32 2L2 32" />
    </svg>
  </div>
);

const BottomBar = () => (
  <footer className="flex h-[176px] flex-col border-t border-[#ccc] bg-[#f6f7fa] leading-none">
    <div className="flex h-[152px]">
      <div className="flex w-[300px] flex-col text-[#e02c2c]">
        <svg viewBox="0 0 20 8" className="ml-[128px] mt-[9px] h-2 w-5" fill="#777">
          <path d="M10 0l10 8H0z" />
        </svg>
        <span className="ml-[72px] mt-[12px] text-[36.5px]">2767.18</span>
        <div className="ml-[41px] mt-[14px] flex w-[222px] items-center justify-between">
          <span className="text-[34.5px] text-[#666]">创业</span>
          <span className="text-[35px]">0.91%</span>
        </div>
      </div>
      <div className="mt-[19px] flex h-24 w-[181px] items-center justify-center rounded-[17px] bg-gradient-to-b from-[#f4504a] to-[#ed756f] text-[43px] text-white">买</div>
      <div className="ml-[15px] mt-[19px] flex h-24 w-[181px] items-center justify-center rounded-[17px] bg-gradient-to-b from-[#3a76fa] to-[#6c99fe] text-[43px] text-white">卖</div>
      <div className="ml-[35px] flex w-[88px] flex-col items-center pt-[16px] text-[32px] text-[#666]">
        <span className="text-[53px] font-medium text-[#333]">撤</span>
        <span className="mt-[16px]">撤单</span>
      </div>
      <div className="ml-[36px] flex w-[100px] flex-col items-center pt-[12px] text-[32px] text-[#666]">
        <svg viewBox="0 0 54 60" className="h-[60px] w-[54px]" fill="none" stroke="#333" strokeWidth="4" strokeLinejoin="round">
          <path d="M24 3q3-2 6 0l19 11q3 2 3 5v22q0 3-3 5L30 57q-3 2-6 0L5 46q-3-2-3-5V19q0-3 3-5z" />
          <circle cx="27" cy="30" r="9" />
        </svg>
        <span className="mt-[13px]">设自选</span>
      </div>
      <div className="ml-[46px] flex w-[64px] flex-col items-center pt-[40px] text-[32px] text-[#666]">
        <div className="flex gap-[9px]">
          <span className="h-[9px] w-[9px] rounded-full bg-[#333]" />
          <span className="h-[9px] w-[9px] rounded-full bg-[#333]" />
          <span className="h-[9px] w-[9px] rounded-full bg-[#333]" />
        </div>
        <span className="mt-[36px]">更多</span>
      </div>
    </div>
    <div className="mx-auto mt-[13px] h-[7px] w-[432px] rounded-full bg-[#b9babc]" />
  </footer>
);

const App: React.FC = () => {
  return (
    <div className="relative h-[2400px] w-[1080px] overflow-hidden bg-white font-['Noto_Sans_CJK_SC',sans-serif]">
      <StatusBar />
      <Header />
      <Quote />
      <Notice />
      <Tabs />
      <MaRow />
      <KLineChart />
      <VolumeRow />
      <VolumeChart />
      <div className="flex h-[62px] items-center pl-4 text-[#222]">
        <div className={`${chip} w-[119px] pl-[6px] text-[36px]`}>
          DDZ
          <Triangle className="ml-auto mr-[7px]" />
        </div>
        <span className="-mt-[4px] ml-[3px] text-[40px] leading-none">5.358</span>
        <Arrow down className="ml-[12px] w-4" />
      </div>
      <DdzChart />
      <DateAxis />
      <PromoBar />
      <div className="mt-[17px] h-[13px] border-t border-[#ccc]" />
      <BottomBar />
      <Toast />
    </div>
  );
};

export default App;
